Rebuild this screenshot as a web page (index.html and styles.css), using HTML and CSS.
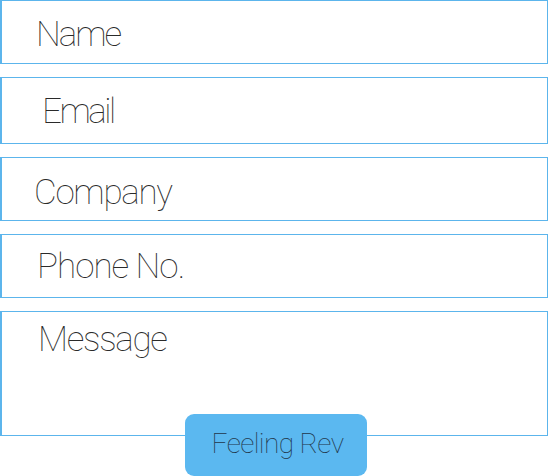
FILE: index.html
```html
<!DOCTYPE html>
<html>
<head>
<meta charset="utf-8">
<link rel="stylesheet" href="styles.css">
</head>
<body>
<form class="form">
  <div class="field field-name"><span class="ph">Name</span></div>
  <div class="field field-email"><span class="ph">Email</span></div>
  <div class="field field-company"><span class="ph">Company</span></div>
  <div class="field field-phone"><span class="ph">Phone No.</span></div>
  <div class="field field-message"><span class="ph">Message</span></div>
  <div class="actions"><button type="button" class="btn">Feeling Rev</button></div>
</form>
</body>
</html>
```
FILE: styles.css
```css
html, body {
  margin: 0;
  padding: 0;
  background: #ffffff;
}
body {
  width: 548px;
  height: 476px;
  overflow: hidden;
  font-family: Roboto, "Liberation Sans", sans-serif;
}
.form {
  display: flex;
  flex-direction: column;
  gap: 13px;
}
.field {
  box-sizing: border-box;
  width: 548px;
  height: 64px;
  border: 1px solid #5cb5ec;
  border-left-width: 2px;
  color: #2a2a2a;
  font-size: 35px;
  font-weight: 100;
  letter-spacing: -1.3px;
  line-height: 1;
}
.ph {
  display: block;
}
.field-name { padding: 16px 0 0 34px; letter-spacing: -2px; }
.field-email { height: 67px; padding: 16px 0 0 40px; letter-spacing: -2.5px; }
.field-company { padding: 17px 0 0 32px; }
.field-phone { padding: 14px 0 0 35px; letter-spacing: -1px; }
.field-message { height: 125px; padding: 10px 0 0 36px; }
.actions {
  margin-top: -35px;
  padding-left: 185px;
}
.btn {
  display: block;
  box-sizing: border-box;
  width: 182px;
  height: 62px;
  border: 0;
  border-radius: 9px;
  background: #5bb8f0;
  color: #22364a;
  font-family: Roboto, "Liberation Sans", sans-serif;
  font-size: 28px;
  font-weight: 100;
  letter-spacing: -0.6px;
  padding: 0 0 3px 3px;
  text-align: center;
}
```
